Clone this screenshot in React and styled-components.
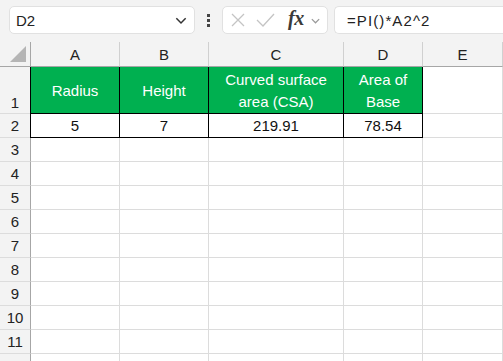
import React from "react";
import styled, { createGlobalStyle } from "styled-components";

const Global = createGlobalStyle`
  html, body { margin: 0; padding: 0; background: #f3f3f3; overflow: hidden; }
  body { font-family: "Liberation Sans", Arial, sans-serif; }
`;

const Page = styled.div`
  width: 503px;
  height: 361px;
  display: flex;
  flex-direction: column;
  background: #f3f3f3;
  overflow: hidden;
`;

const Toolbar = styled.div`
  height: 42px;
  flex-shrink: 0;
  display: flex;
  align-items: flex-start;
  padding: 6px 0 0 9px;
  box-sizing: border-box;
`;

const Box = styled.div`
  height: 28px;
  box-sizing: border-box;
  background: #fff;
  border: 1px solid #e1e1e1;
  border-radius: 5px;
  display: flex;
  align-items: center;
`;

const NameBox = styled(Box)`
  width: 186px;
  padding: 0 6px 0 6px;
  justify-content: space-between;
  font-size: 15px;
  color: #222;
`;

const Dots = styled.div`
  width: 27px;
  display: flex;
  flex-direction: column;
  align-items: center;
  justify-content: center;
  gap: 2px;
  height: 28px;
  span {
    width: 3px;
    height: 3px;
    background: #444;
  }
`;

const IconBox = styled(Box)`
  width: 106px;
  padding: 0 0 0 7px;
  gap: 10px;
`;

const Fx = styled.span`
  font-family: "Liberation Serif", serif;
  font-style: italic;
  font-weight: bold;
  font-size: 20px;
  color: #3a3a3a;
  margin: -3px -4px 0 3px;
  letter-spacing: -0.5px;
`;

const FormulaBox = styled(Box)`
  flex: 1;
  margin-left: 6px;
  border-right: none;
  border-radius: 5px 0 0 5px;
  padding-left: 12px;
  font-size: 15px;
  letter-spacing: 1.1px;
  color: #222;
`;

const Grid = styled.div`
  flex-shrink: 0;
  display: grid;
  grid-template-columns: 31px 89px 89px 135px 79px 1fr;
  grid-template-rows: 25px 47px 24px repeat(10, 24px);
  background: #fff;
  font-size: 15px;
`;

const Cell = styled.div`
  box-sizing: border-box;
  border-right: 1px solid #dcdcdc;
  border-bottom: 1px solid #dcdcdc;
  display: flex;
  align-items: center;
  justify-content: center;
  color: #111;
`;

const ColHead = styled(Cell)`
  background: #f3f3f3;
  border-bottom: 1px solid #a6a6a6;
  border-right: 1px solid #d0d0d0;
  color: #222;
`;

const Corner = styled(ColHead)`
  border-right: 1px solid #a6a6a6;
  justify-content: flex-end;
  align-items: flex-end;
  padding: 0 4px 4px 0;
`;

const RowHead = styled(Cell)`
  background: #f3f3f3;
  border-right: 1px solid #a6a6a6;
  border-bottom: 1px solid #dcdcdc;
  align-items: ${(p) => (p.$tall ? "flex-end" : "center")};
  padding-bottom: ${(p) => (p.$tall ? "2px" : "0")};
  color: #222;
`;

const HeadCell = styled(Cell)`
  background: #00b050;
  color: #fff;
  text-align: center;
  line-height: 22px;
  border-right: 1px solid #000;
  border-bottom: 1px solid #000;
  border-left: ${(p) => (p.$first ? "1px solid #000" : "none")};
  margin-left: ${(p) => (p.$first ? "-1px" : "0")};
  padding-top: 1px;
`;

const DataCell = styled(Cell)`
  border-right: 1px solid #000;
  border-bottom: 1px solid #000;
  border-left: ${(p) => (p.$first ? "1px solid #000" : "none")};
  margin-left: ${(p) => (p.$first ? "-1px" : "0")};
`;

const Chevron = ({ size = 12, color = "#444" }) => (
  <svg width={size} height={size} viewBox="0 0 12 12">
    <path d="M2 4.5 L6 8.5 L10 4.5" fill="none" stroke={color} strokeWidth="1.3" />
  </svg>
);

const columns = ["A", "B", "C", "D", "E"];
const headers = ["Radius", "Height", ["Curved surface", "area (CSA)"], ["Area of", "Base"]];
const values = ["5", "7", "219.91", "78.54"];

export default function App() {
  return (
    <Page>
      <Global />
      <Toolbar>
        <NameBox>
          D2
          <Chevron size={14} color="#333" />
        </NameBox>
        <Dots>
          <span />
          <span />
          <span />
        </Dots>
        <IconBox>
          <svg width="16" height="16" viewBox="0 0 16 16">
            <path d="M2 2 L14 14 M14 2 L2 14" stroke="#c4c4c4" strokeWidth="1.3" />
          </svg>
          <svg width="19" height="16" viewBox="0 0 19 16">
            <path d="M1 8 L7 14 L18 2" fill="none" stroke="#c4c4c4" strokeWidth="1.3" />
          </svg>
          <Fx>fx</Fx>
          <Chevron size={11} color="#999" />
        </IconBox>
        <FormulaBox>=PI()*A2^2</FormulaBox>
      </Toolbar>
      <Grid>
        <Corner>
          <svg width="16" height="16" viewBox="0 0 16 16">
            <path d="M16 0 L16 16 L0 16 Z" fill="#b5b5b5" />
          </svg>
        </Corner>
        {columns.map((c) => (
          <ColHead key={c}>{c}</ColHead>
        ))}

        <RowHead $tall>1</RowHead>
        {headers.map((h, i) => (
          <HeadCell key={i} $first={i === 0}>
            {Array.isArray(h) ? (
              <div>
                {h[0]}
                <br />
                {h[1]}
              </div>
            ) : (
              h
            )}
          </HeadCell>
        ))}
        <Cell />

        <RowHead>2</RowHead>
        {values.map((v, i) => (
          <DataCell key={i} $first={i === 0}>
            {v}
          </DataCell>
        ))}
        <Cell />

        {[3, 4, 5, 6, 7, 8, 9, 10, 11].map((r) => (
          <React.Fragment key={r}>
            <RowHead>{r}</RowHead>
            {columns.map((c) => (
              <Cell key={c} />
            ))}
          </React.Fragment>
        ))}
        <RowHead />
        {columns.map((c) => (
          <Cell key={c} />
        ))}
      </Grid>
    </Page>
  );
}
